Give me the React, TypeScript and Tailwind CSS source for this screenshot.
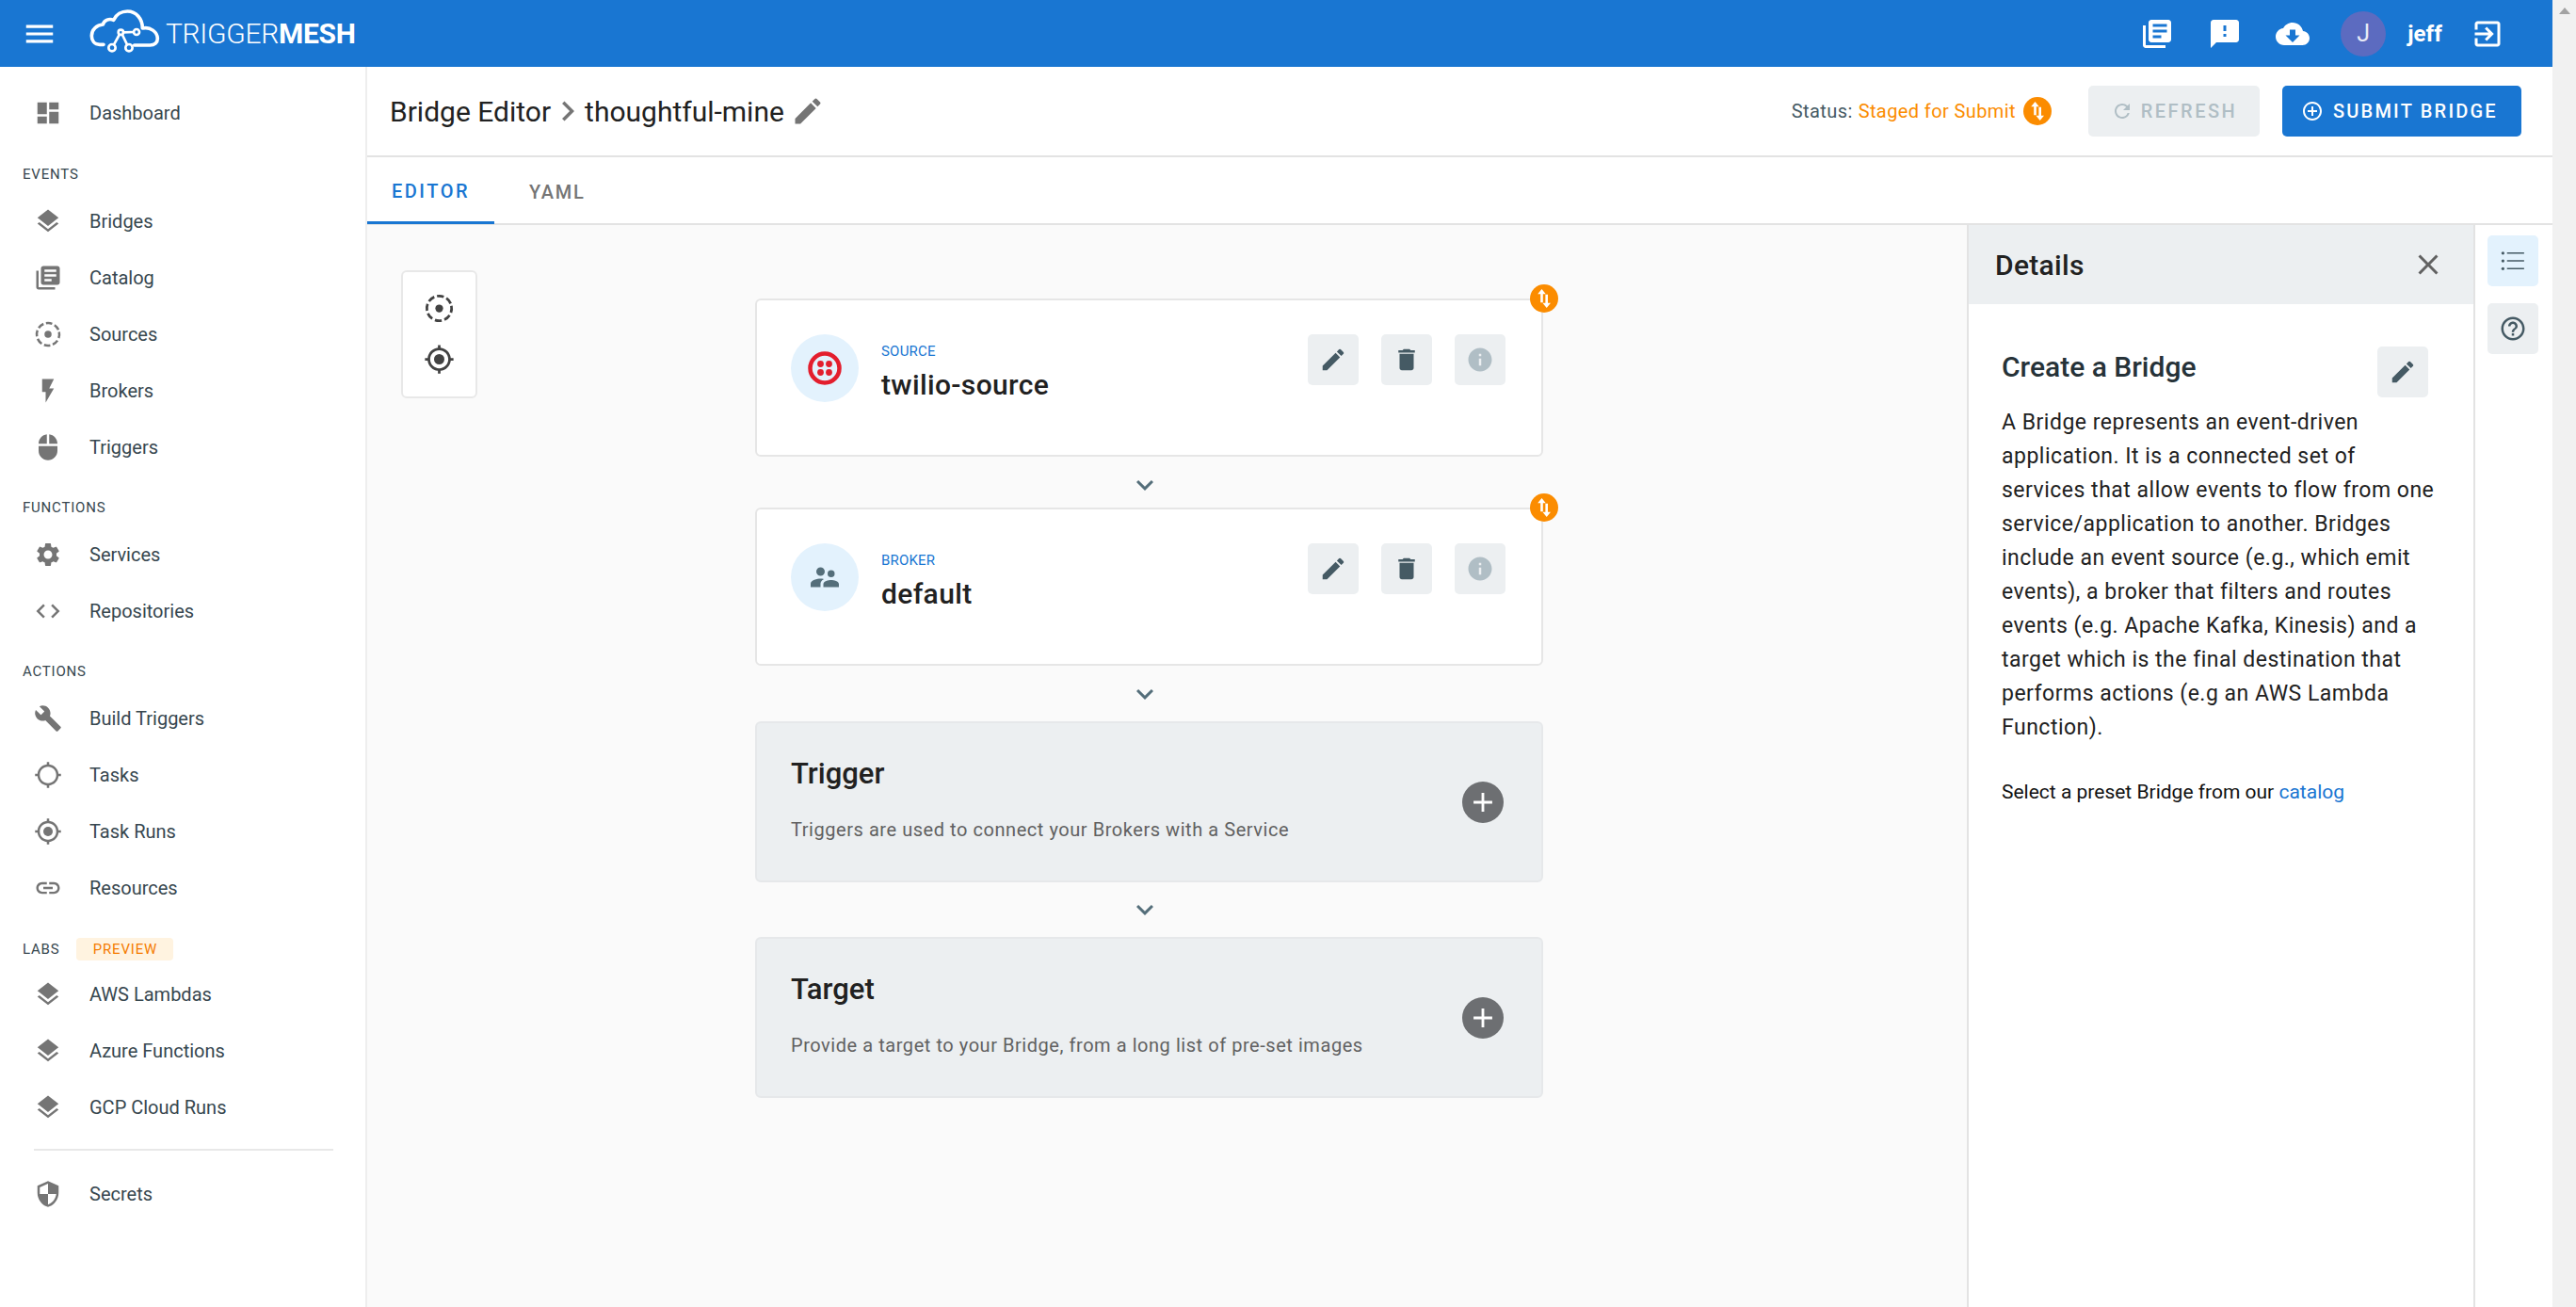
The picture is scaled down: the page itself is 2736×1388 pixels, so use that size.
import React from "react";

const P: Record<string, string> = {
  dashboard: "M3 13h8V3H3v10zm0 8h8v-6H3v6zm10 0h8V11h-8v10zm0-18v6h8V3h-8z",
  layers: "M11.99 18.54l-7.37-5.73L3 14.07l9 7 9-7-1.63-1.27-7.38 5.74zM12 16l7.36-5.73L21 9l-9-7-9 7 1.63 1.27L12 16z",
  catalog: "M4 6H2v14c0 1.1.9 2 2 2h14v-2H4V6zm16-4H8c-1.1 0-2 .9-2 2v12c0 1.1.9 2 2 2h12c1.1 0 2-.9 2-2V4c0-1.1-.9-2-2-2zm-1 9H9V9h10v2zm-4 4H9v-2h6v2zm4-8H9V5h10v2z",
  bolt: "M7 2v11h3v9l7-12h-4l4-8z",
  mouse: "M13 1.07V9h7c0-4.08-3.05-7.44-7-7.93zM4 15c0 4.42 3.58 8 8 8s8-3.58 8-8v-4H4v4zm7-13.93C7.05 1.56 4 4.92 4 9h7V1.07z",
  gear: "M19.14 12.94c.04-.3.06-.61.06-.94 0-.32-.02-.64-.07-.94l2.03-1.58a.49.49 0 0 0 .12-.61l-1.92-3.32a.488.488 0 0 0-.59-.22l-2.39.96c-.5-.38-1.03-.7-1.62-.94l-.36-2.54a.484.484 0 0 0-.48-.41h-3.84c-.24 0-.43.17-.47.41l-.36 2.54c-.59.24-1.13.57-1.62.94l-2.39-.96c-.22-.08-.47 0-.59.22L2.74 8.87c-.12.21-.08.47.12.61l2.03 1.58c-.05.3-.09.63-.09.94s.02.64.07.94l-2.03 1.58a.49.49 0 0 0-.12.61l1.92 3.32c.12.22.37.29.59.22l2.39-.96c.5.38 1.03.7 1.62.94l.36 2.54c.05.24.24.41.48.41h3.84c.24 0 .44-.17.47-.41l.36-2.54c.59-.24 1.13-.56 1.62-.94l2.39.96c.22.08.47 0 .59-.22l1.92-3.32c.12-.22.07-.47-.12-.61l-2.01-1.58zM12 15.6c-1.98 0-3.6-1.62-3.6-3.6s1.62-3.6 3.6-3.6 3.6 1.62 3.6 3.6-1.62 3.6-3.6 3.6z",
  code: "M9.4 16.6L4.8 12l4.6-4.6L8 6l-6 6 6 6 1.4-1.4zm5.2 0l4.6-4.6-4.6-4.6L16 6l6 6-6 6-1.4-1.4z",
  wrench: "M22.7 19l-9.1-9.1c.9-2.3.4-5-1.5-6.9-2-2-5-2.4-7.4-1.3L9 6 6 9 1.6 4.7C.4 7.1.9 10.1 2.9 12.1c1.9 1.9 4.6 2.4 6.9 1.5l9.1 9.1c.4.4 1 .4 1.4 0l2.3-2.3c.5-.4.5-1.1.1-1.4z",
  target: "M20.94 11c-.46-4.17-3.77-7.48-7.94-7.94V1h-2v2.06C6.83 3.52 3.52 6.83 3.06 11H1v2h2.06c.46 4.17 3.77 7.48 7.94 7.94V23h2v-2.06c4.17-.46 7.48-3.77 7.94-7.94H23v-2h-2.06zM12 19c-3.87 0-7-3.13-7-7s3.13-7 7-7 7 3.13 7 7-3.13 7-7 7z",
  link: "M3.9 12c0-1.71 1.39-3.1 3.1-3.1h4V7H7c-2.76 0-5 2.24-5 5s2.24 5 5 5h4v-1.9H7c-1.71 0-3.1-1.39-3.1-3.1zM8 13h8v-2H8v2zm9-6h-4v1.9h4c1.71 0 3.1 1.39 3.1 3.1s-1.39 3.1-3.1 3.1h-4V17h4c2.76 0 5-2.24 5-5s-2.24-5-5-5z",
  shield: "M12 1L3 5v6c0 5.55 3.84 10.74 9 12 5.16-1.26 9-6.45 9-12V5l-9-4zm0 10.99h7c-.53 4.12-3.28 7.79-7 8.94V12H5V6.3l7-3.11v8.8z",
  pencil: "M3 17.25V21h3.75L17.81 9.94l-3.75-3.75L3 17.25zM20.71 7.04a1 1 0 0 0 0-1.41l-2.34-2.34a1 1 0 0 0-1.41 0l-1.83 1.83 3.75 3.75 1.83-1.83z",
  trash: "M6 19c0 1.1.9 2 2 2h8c1.1 0 2-.9 2-2V7H6v12zM19 4h-3.5l-1-1h-5l-1 1H5v2h14V4z",
  info: "M12 2C6.48 2 2 6.48 2 12s4.48 10 10 10 10-4.48 10-10S17.52 2 12 2zm1 15h-2v-6h2v6zm0-8h-2V7h2v2z",
  people: "M16.5 12a2.5 2.5 0 1 0 0-5 2.5 2.5 0 0 0 0 5zM9 11a3 3 0 1 0 0-6 3 3 0 0 0 0 6zm7.5 3c-1.83 0-5.5.92-5.5 2.75V19h11v-2.25c0-1.83-3.67-2.75-5.5-2.75zM9 13c-2.33 0-7 1.17-7 3.5V19h7v-2.25c0-.85.33-2.34 2.37-3.47C10.5 13.1 9.66 13 9 13z",
  plus: "M19 13h-6v6h-2v-6H5v-2h6V5h2v6h6v2z",
  close: "M19 6.41L17.59 5 12 10.59 6.41 5 5 6.41 10.59 12 5 17.59 6.41 19 12 13.41 17.59 19 19 17.59 13.41 12z",
  chevronDown: "M7.41 8.59L12 13.17l4.59-4.58L18 10l-6 6-6-6z",
  chevronRight: "M10 6L8.59 7.41 13.17 12l-4.58 4.59L10 18l6-6z",
  help: "M11 18h2v-2h-2v2zm1-16C6.48 2 2 6.48 2 12s4.48 10 10 10 10-4.48 10-10S17.52 2 12 2zm0 18c-4.41 0-8-3.59-8-8s3.59-8 8-8 8 3.59 8 8-3.59 8-8 8zm0-14c-2.21 0-4 1.79-4 4h2c0-1.1.9-2 2-2s2 .9 2 2c0 2-3 1.75-3 5h2c0-2.25 3-2.5 3-5 0-2.21-1.79-4-4-4z",
  menu: "M3 18h18v-2H3v2zm0-5h18v-2H3v2zm0-7v2h18V6H3z",
  feedback: "M20 2H4c-1.1 0-1.99.9-1.99 2L2 22l4-4h14c1.1 0 2-.9 2-2V4c0-1.1-.9-2-2-2zm-7 12h-2v-2h2v2zm0-4h-2V6h2v4z",
  cloud: "M19.35 10.04C18.67 6.59 15.64 4 12 4 9.11 4 6.6 5.64 5.35 8.04 2.34 8.36 0 10.91 0 14c0 3.31 2.69 6 6 6h13c2.76 0 5-2.24 5-5 0-2.64-2.05-4.78-4.65-4.96zM17 13l-5 5-5-5h3V9h4v4h3z",
  exit: "M10.09 15.59L11.5 17l5-5-5-5-1.41 1.41L12.67 11H3v2h9.67l-2.58 2.59zM19 3H5c-1.11 0-2 .9-2 2v4h2V5h14v14H5v-4H3v4c0 1.1.89 2 2 2h14c1.1 0 2-.9 2-2V5c0-1.1-.9-2-2-2z",
  refresh: "M17.65 6.35A7.958 7.958 0 0 0 12 4c-4.42 0-7.99 3.58-7.99 8s3.57 8 7.99 8c3.73 0 6.84-2.55 7.73-6h-2.08A5.99 5.99 0 0 1 12 18c-3.31 0-6-2.69-6-6s2.69-6 6-6c1.66 0 3.14.69 4.22 1.78L13 11h7V4l-2.35 2.35z",
  addCircle: "M13 7h-2v4H7v2h4v4h2v-4h4v-2h-4V7zm-1-5C6.48 2 2 6.48 2 12s4.48 10 10 10 10-4.48 10-10S17.52 2 12 2zm0 18c-4.41 0-8-3.59-8-8s3.59-8 8-8 8 3.59 8 8-3.59 8-8 8z",
};

function Icon({ name, className }: { name: string; className: string }) {
  return (
    <svg viewBox="0 0 24 24" className={className} fill="currentColor">
      <path d={P[name]} />
    </svg>
  );
}

function SourceIcon({ className }: { className: string }) {
  return (
    <svg viewBox="0 0 24 24" className={className} fill="currentColor">
      <circle cx="12" cy="12" r="3" />
      <circle cx="12" cy="12" r="9.600" fill="none" stroke="currentColor" strokeWidth="2" strokeDasharray="5.300 2.240" transform="rotate(-12 12 12)" />
    </svg>
  );
}

function TaskRunIcon({ className }: { className: string }) {
  return (
    <svg viewBox="0 0 24 24" className={className} fill="currentColor">
      <path d={P.target} />
      <circle cx="12" cy="12" r="4" />
    </svg>
  );
}

function ListIcon({ className }: { className: string }) {
  return (
    <svg viewBox="0 0 24 24" className={className} fill="currentColor">
      <circle cx="3.500" cy="5.400" r="1.300" />
      <circle cx="3.500" cy="12" r="1.300" />
      <circle cx="3.500" cy="18.600" r="1.300" />
      <path d="M7 5.400h14.500M7 12h14.500M7 18.600h14.500" stroke="currentColor" strokeWidth="1.300" fill="none" />
    </svg>
  );
}

function SwapGlyph() {
  return (
    <svg viewBox="0 0 30 30" className="h-[30px] w-[30px]" fill="#ffffff">
      <path d="M12.500 5l4.300 5.200h-3v9h-2.600v-9h-3z" />
      <path d="M17.700 25l-4.300-5.200h3v-9h2.600v9h3z" />
    </svg>
  );
}

function SwapBadge() {
  return (
    <div className="absolute -right-[18px] -top-[17px] flex h-[30px] w-[30px] items-center justify-center rounded-full bg-[#fb8c00]">
      <SwapGlyph />
    </div>
  );
}

function Logo() {
  return (
    <svg viewBox="0 0 270 180" className="h-[60px] w-[90px]" fill="none" stroke="#ffffff" strokeWidth="11" strokeLinecap="round" strokeLinejoin="round">
      <path d="M60 124H48C30 124 22 110 22 96 22 76 38 62 58 60 62 46 78 40 92 46 100 28 118 18 136 18 164 18 184 42 184 72 208 66 232 84 232 105 232 118 222 126 208 126H158" />
      <g strokeWidth="8">
        <circle cx="87" cy="134" r="11" />
        <circle cx="141" cy="134" r="11" />
        <circle cx="115" cy="85" r="8" />
        <circle cx="165" cy="84" r="9" />
        <path d="M93 124 110 93M120 93 135 124M123 85 156 84" />
      </g>
    </svg>
  );
}

type Item = { label: string; icon: React.ReactNode };
const cls = "h-[30px] w-[30px] text-[#757575]";

function NavItem({ label, icon }: Item) {
  return (
    <div className="flex h-[60px] items-center pl-[36px]">
      <div className="flex w-[30px] shrink-0 justify-center">{icon}</div>
      <span className="ml-[29px] text-[20px] leading-[28px] text-[#37474f]">{label}</span>
    </div>
  );
}

function SectionLabel({ children }: { children: React.ReactNode }) {
  return <div className="pl-[24px] text-[15px] leading-[20px] tracking-[0.8px] text-[#37474f]">{children}</div>;
}

function Sidebar() {
  return (
    <aside className="flex w-[390px] shrink-0 flex-col border-r-[2px] border-[#eeeeee] bg-white pt-[19px]">
      <NavItem label="Dashboard" icon={<Icon name="dashboard" className={cls} />} />
      <div className="mt-[25px] mb-[10px]"><SectionLabel>EVENTS</SectionLabel></div>
      <NavItem label="Bridges" icon={<Icon name="layers" className={cls} />} />
      <NavItem label="Catalog" icon={<Icon name="catalog" className={cls} />} />
      <NavItem label="Sources" icon={<SourceIcon className={cls} />} />
      <NavItem label="Brokers" icon={<Icon name="bolt" className={cls} />} />
      <NavItem label="Triggers" icon={<Icon name="mouse" className={cls} />} />
      <div className="mt-[24px] mb-[10px]"><SectionLabel>FUNCTIONS</SectionLabel></div>
      <NavItem label="Services" icon={<Icon name="gear" className={cls} />} />
      <NavItem label="Repositories" icon={<Icon name="code" className={cls} />} />
      <div className="mt-[24px] mb-[10px]"><SectionLabel>ACTIONS</SectionLabel></div>
      <NavItem label="Build Triggers" icon={<Icon name="wrench" className={cls} />} />
      <NavItem label="Tasks" icon={<Icon name="target" className={cls} />} />
      <NavItem label="Task Runs" icon={<TaskRunIcon className={cls} />} />
      <NavItem label="Resources" icon={<Icon name="link" className={cls} />} />
      <div className="mt-[23px] mb-[6px] flex h-[24px] items-center">
        <SectionLabel>LABS</SectionLabel>
        <span className="ml-[18px] flex h-[24px] w-[103px] items-center justify-center rounded-[4px] bg-[#fff3e0] text-[15px] tracking-[0.8px] text-[#f57c00]">PREVIEW</span>
      </div>
      <NavItem label="AWS Lambdas" icon={<Icon name="layers" className={cls} />} />
      <NavItem label="Azure Functions" icon={<Icon name="layers" className={cls} />} />
      <NavItem label="GCP Cloud Runs" icon={<Icon name="layers" className={cls} />} />
      <div className="mx-[36px] mt-[14px] h-[2px] w-[318px] bg-[#e8e8e8]" />
      <div className="mt-[16px]"><NavItem label="Secrets" icon={<Icon name="shield" className={cls} />} /></div>
    </aside>
  );
}

function TopBar() {
  return (
    <header className="flex h-[71px] shrink-0 items-center bg-[#1976d2] text-white">
      <Icon name="menu" className="ml-[23px] h-[38px] w-[38px]" />
      <div className="ml-[29px]"><Logo /></div>
      <div className="-ml-[4px] text-[30px] leading-none tracking-[-0.3px] font-light">TRIGGER<span className="font-bold">MESH</span></div>
      <div className="ml-auto flex items-center pr-[51px]">
        <Icon name="catalog" className="h-[36px] w-[36px]" />
        <Icon name="feedback" className="ml-[36px] h-[36px] w-[36px]" />
        <Icon name="cloud" className="ml-[36px] h-[36px] w-[36px]" />
        <div className="ml-[33px] flex h-[48px] w-[48px] items-center justify-center rounded-full bg-[#5c6bc0] text-[25px] text-[#e8eaf6]">J</div>
        <span className="ml-[23px] text-[24px] font-bold tracking-[0.1px]">jeff</span>
        <Icon name="exit" className="ml-[30px] h-[36px] w-[36px]" />
      </div>
    </header>
  );
}

function NodeCard({ kind, name, icon }: { kind: string; name: string; icon: React.ReactNode }) {
  const btn = "flex h-[54px] w-[54px] items-center justify-center rounded-[5px] bg-[#eceff1]";
  return (
    <div className="relative h-[168px] rounded-[6px] border-[2px] border-[#e6e6e6] bg-white pl-[36px] pr-[38px] pt-[36px]">
      <SwapBadge />
      <div className="flex items-start">
        <div className="flex h-[72px] w-[72px] items-center justify-center rounded-full bg-[#e3f2fd]">{icon}</div>
        <div className="ml-[24px] flex flex-col">
          <span className="mt-[8px] text-[15px] leading-[20px] tracking-[0.2px] text-[#1976d2]">{kind}</span>
          <span className="mt-[4px] text-[30px] leading-[44px] font-medium tracking-[0.35px] text-[#212121]">{name}</span>
        </div>
        <div className="ml-auto flex gap-[24px]">
          <div className={btn}><Icon name="pencil" className="h-[30px] w-[30px] text-[#455a64]" /></div>
          <div className={btn}><Icon name="trash" className="h-[30px] w-[30px] text-[#455a64]" /></div>
          <div className={btn}><Icon name="info" className="h-[30px] w-[30px] text-[#b0bec5]" /></div>
        </div>
      </div>
    </div>
  );
}

function AddCard({ title, desc }: { title: string; desc: string }) {
  return (
    <div className="flex h-[171px] items-center justify-between rounded-[6px] border-[2px] border-[#e6e8ea] bg-[#eceff1] pl-[36px] pr-[40px]">
      <div className="flex flex-col pb-[6px]">
        <span className="text-[31px] leading-[40px] font-medium text-[#212121]">{title}</span>
        <span className="mt-[25px] text-[20px] leading-[28px] tracking-[0.55px] text-[#616161]">{desc}</span>
      </div>
      <div className="flex h-[44px] w-[44px] items-center justify-center rounded-full bg-[#6d6f72]">
        <Icon name="plus" className="h-[34px] w-[34px] text-white" />
      </div>
    </div>
  );
}

function Arrow({ className }: { className: string }) {
  return (
    <div className={`flex items-center justify-center pr-[10px] ${className}`}>
      <Icon name="chevronDown" className="h-[36px] w-[36px] text-[#546e7a]" />
    </div>
  );
}

function Canvas() {
  return (
    <div className="relative flex min-w-0 flex-1 justify-start bg-[#fafafa] pl-[412px] pt-[78px]">
      <div className="absolute left-[36px] top-[48px] flex h-[136px] w-[81px] flex-col items-center gap-[21px] rounded-[6px] border-[2px] border-[#e8e8e8] bg-white pt-[22px]">
        <SourceIcon className="h-[33px] w-[33px] text-[#424242]" />
        <TaskRunIcon className="h-[33px] w-[33px] text-[#424242]" />
      </div>
      <div className="flex w-[837px] flex-col">
        <NodeCard kind="SOURCE" name="twilio-source" icon={
          <svg viewBox="0 0 36 36" className="h-[36px] w-[36px]">
            <circle cx="18" cy="18" r="15.500" fill="none" stroke="#e31e2d" strokeWidth="4.500" />
            <circle cx="13.500" cy="13.500" r="3.400" fill="#e31e2d" />
            <circle cx="22.500" cy="13.500" r="3.400" fill="#e31e2d" />
            <circle cx="13.500" cy="22.500" r="3.400" fill="#e31e2d" />
            <circle cx="22.500" cy="22.500" r="3.400" fill="#e31e2d" />
          </svg>
        } />
        <Arrow className="h-[54px] pt-[6px]" />
        <NodeCard kind="BROKER" name="default" icon={<Icon name="people" className="h-[36px] w-[36px] text-[#546e7a]" />} />
        <Arrow className="h-[59px]" />
        <AddCard title="Trigger" desc="Triggers are used to connect your Brokers with a Service" />
        <Arrow className="h-[58px]" />
        <AddCard title="Target" desc="Provide a target to your Bridge, from a long list of pre-set images" />
      </div>
    </div>
  );
}

function DetailsPanel() {
  return (
    <div className="flex w-[540px] shrink-0 flex-col border-x-[2px] border-[#e3e3e3] bg-white">
      <div className="flex h-[84px] shrink-0 items-center justify-between bg-[#eceff1] pl-[28px] pr-[30px]">
        <span className="text-[30px] font-medium tracking-[0.3px] text-[#212121]">Details</span>
        <Icon name="close" className="h-[36px] w-[36px] text-[#616161]" />
      </div>
      <div className="pl-[35px] pr-[36px] pt-[45px]">
        <div className="flex items-start justify-between pr-[12px]">
          <span className="mt-[2px] text-[30px] leading-[40px] font-medium text-[#263238]">Create a Bridge</span>
          <div className="flex h-[54px] w-[54px] items-center justify-center rounded-[5px] bg-[#eceff1]">
            <Icon name="pencil" className="h-[30px] w-[30px] text-[#455a64]" />
          </div>
        </div>
        <p className="mt-[9px] text-[23px] leading-[36px] tracking-[0.5px] text-[#212121]">
          A Bridge represents an event-driven application. It is a connected set of services that allow events to flow from one service/application to another. Bridges include an event source (e.g., which emit events), a broker that filters and routes events (e.g. Apache Kafka, Kinesis) and a target which is the final destination that performs actions (e.g an AWS Lambda Function).
        </p>
        <p className="mt-[35px] text-[21px] leading-[30px] text-[#111111]">
          Select a preset Bridge from our <span className="text-[#1976d2]">catalog</span>
        </p>
      </div>
    </div>
  );
}

function Rail() {
  return (
    <div className="flex w-[82px] shrink-0 flex-col items-center gap-[18px] bg-white pr-[2px] pt-[11px]">
      <div className="flex h-[54px] w-[54px] items-center justify-center rounded-[5px] bg-[#e3f2fd]">
        <ListIcon className="h-[30px] w-[30px] text-[#455a64]" />
      </div>
      <div className="flex h-[54px] w-[54px] items-center justify-center rounded-[5px] bg-[#eceff1]">
        <Icon name="help" className="h-[30px] w-[30px] text-[#455a64]" />
      </div>
    </div>
  );
}

function PageHeader() {
  return (
    <div className="flex h-[96px] shrink-0 items-center border-b-[2px] border-[#e3e3e3] bg-white pl-[24px] pr-[33px]">
      <span className="text-[30px] text-[#212121]">Bridge Editor</span>
      <Icon name="chevronRight" className="mx-[-3px] h-[42px] w-[42px] text-[#757575]" />
      <span className="text-[30px] text-[#212121]">thoughtful-mine</span>
      <Icon name="pencil" className="ml-[7px] h-[36px] w-[36px] text-[#757575]" />
      <div className="ml-auto flex items-center">
        <span className="text-[20px] tracking-[0.4px] text-[#455a64]">Status:</span>
        <span className="ml-[6px] text-[20px] tracking-[0.4px] text-[#fb8c00]">Staged for Submit</span>
        <div className="ml-[8px] flex h-[30px] w-[30px] items-center justify-center rounded-full bg-[#fb8c00]"><SwapGlyph /></div>
        <div className="ml-[39px] flex h-[54px] w-[182px] items-center justify-center rounded-[5px] bg-[#eceff1] text-[20px] font-medium tracking-[2.500px] text-[#b0bec5]">
          <Icon name="refresh" className="mr-[8px] h-[24px] w-[24px]" />REFRESH
        </div>
        <div className="ml-[24px] flex h-[54px] w-[254px] items-center rounded-[5px] bg-[#1976d2] pl-[20px] text-[20px] font-medium tracking-[2.200px] text-white">
          <Icon name="addCircle" className="mr-[10px] h-[24px] w-[24px]" />SUBMIT BRIDGE
        </div>
      </div>
    </div>
  );
}

function Tabs() {
  return (
    <div className="flex h-[72px] shrink-0 border-b-[2px] border-[#e3e3e3] bg-white">
      <div className="flex h-[71px] w-[135px] items-center justify-center border-b-[3px] border-[#1976d2] pt-[3px] text-[20px] font-medium tracking-[2.500px] text-[#1976d2]">EDITOR</div>
      <div className="ml-[37px] flex h-[70px] items-center pt-[3px] text-[20px] font-medium tracking-[1.700px] text-[#757575]">YAML</div>
    </div>
  );
}

export default function App() {
  return (
    <div className="flex h-screen w-full overflow-hidden bg-white font-['Roboto',sans-serif]">
      <div className="flex min-w-0 flex-1 flex-col">
        <TopBar />
        <div className="flex min-h-0 flex-1">
          <Sidebar />
          <main className="flex min-w-0 flex-1 flex-col">
            <PageHeader />
            <Tabs />
            <div className="flex min-h-0 flex-1">
              <Canvas />
              <DetailsPanel />
              <Rail />
            </div>
          </main>
        </div>
      </div>
      <div className="flex w-[25px] shrink-0 flex-col items-center bg-[#f1f1f1] pt-[8px]">
        <div className="h-0 w-0 border-x-[6px] border-b-[7px] border-x-transparent border-b-[#a3a3a3]" />
      </div>
    </div>
  );
}
